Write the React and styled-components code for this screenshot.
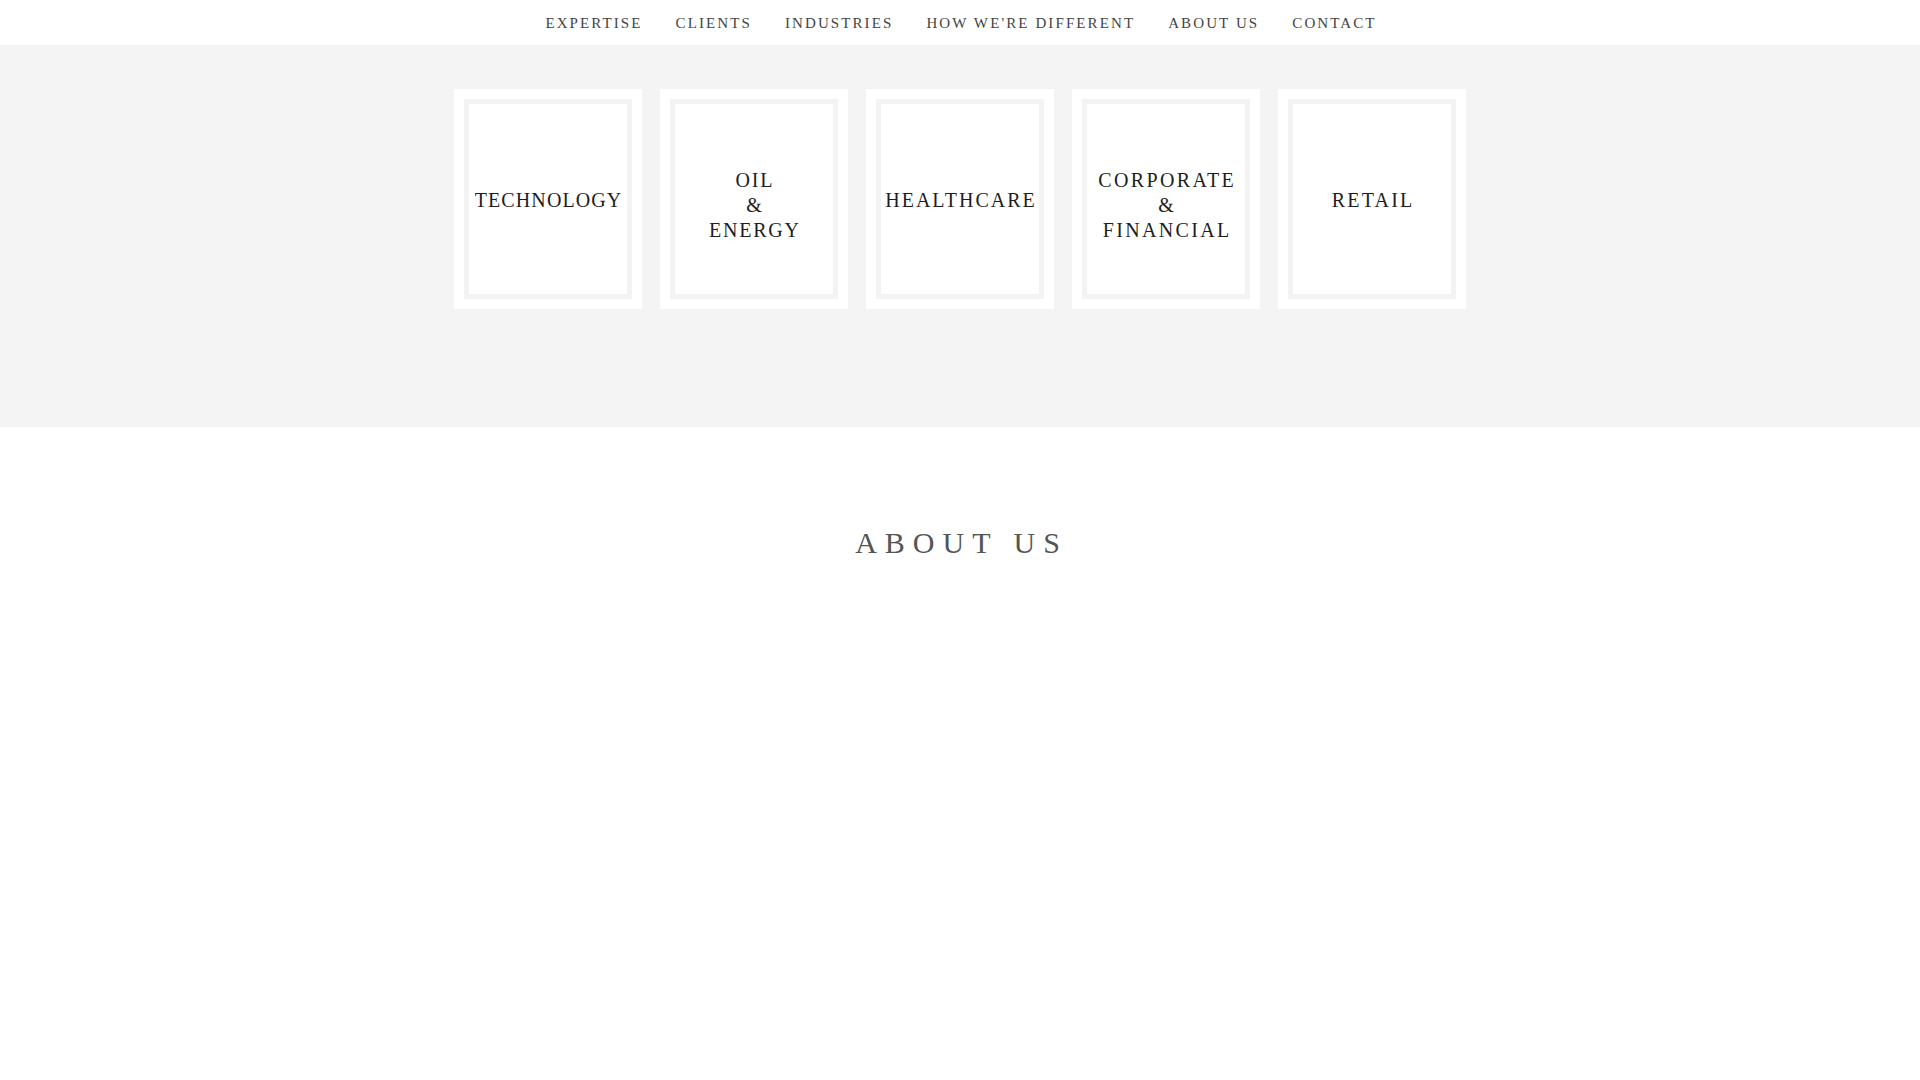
import React from "react";
import styled, { createGlobalStyle } from "styled-components";

const Global = createGlobalStyle`
  html, body { margin: 0; padding: 0; background: #ffffff; }
  body { font-family: "Liberation Serif", "Times New Roman", serif; }
  * { box-sizing: border-box; }
`;

const Page = styled.div`
  min-height: 1080px;
  display: flex;
  flex-direction: column;
  background: #ffffff;
`;

const Nav = styled.nav`
  height: 45px;
  display: flex;
  justify-content: center;
  align-items: center;
  gap: 33px;
  background: #ffffff;
  padding-left: 2px;
`;

const NavLink = styled.a`
  font-family: "Liberation Serif", "Times New Roman", serif;
  font-size: 15px;
  letter-spacing: 2.1px;
  color: #444444;
  text-decoration: none;
  text-transform: uppercase;
  line-height: 1;
  padding-top: 1px;
  cursor: pointer;
`;

const Industries = styled.section`
  background: #f4f4f4;
  padding: 44px 0 118px;
  display: flex;
  justify-content: center;
  gap: 18px;
`;

const Card = styled.div`
  width: 188px;
  height: 220px;
  background: #ffffff;
  padding: 10px;
  display: flex;
`;

const CardFrame = styled.div`
  flex: 1;
  border: 5px solid #f3f3f3;
  display: flex;
  align-items: center;
  justify-content: center;
  text-align: center;
`;

const CardLabel = styled.div`
  font-family: "Liberation Serif", "Times New Roman", serif;
  font-size: 20px;
  line-height: 25px;
  letter-spacing: ${(p) => p.$spacing}px;
  color: #1e1e1e;
  text-transform: uppercase;
  white-space: nowrap;
  margin-right: -${(p) => p.$spacing}px;
  padding-top: ${(p) => (p.$multi ? 12 : 2)}px;
`;

const About = styled.section`
  padding-top: 98px;
  display: flex;
  justify-content: center;
`;

const Heading = styled.h2`
  margin: 0;
  font-family: "Liberation Serif", "Times New Roman", serif;
  font-weight: normal;
  font-size: 30px;
  line-height: 36px;
  letter-spacing: 8px;
  margin-right: -3px;
  color: #555555;
`;

const links = ["EXPERTISE", "CLIENTS", "INDUSTRIES", "HOW WE'RE DIFFERENT", "ABOUT US", "CONTACT"];

const cards = [
  { lines: ["TECHNOLOGY"], spacing: 1.1 },
  { lines: ["OIL", "&", "ENERGY"], spacing: 1.8 },
  { lines: ["HEALTHCARE"], spacing: 2 },
  { lines: ["CORPORATE", "&", "FINANCIAL"], spacing: 2.35 },
  { lines: ["RETAIL"], spacing: 2.2 },
];

export default function App() {
  return (
    <Page>
      <Global />
      <Nav>
        {links.map((l) => (
          <NavLink key={l}>{l}</NavLink>
        ))}
      </Nav>
      <Industries>
        {cards.map((c) => (
          <Card key={c.lines.join("")}>
            <CardFrame>
              <CardLabel $spacing={c.spacing} $multi={c.lines.length > 1}>
                {c.lines.map((line, i) => (
                  <div key={i}>{line}</div>
                ))}
              </CardLabel>
            </CardFrame>
          </Card>
        ))}
      </Industries>
      <About>
        <Heading>ABOUT US</Heading>
      </About>
    </Page>
  );
}
